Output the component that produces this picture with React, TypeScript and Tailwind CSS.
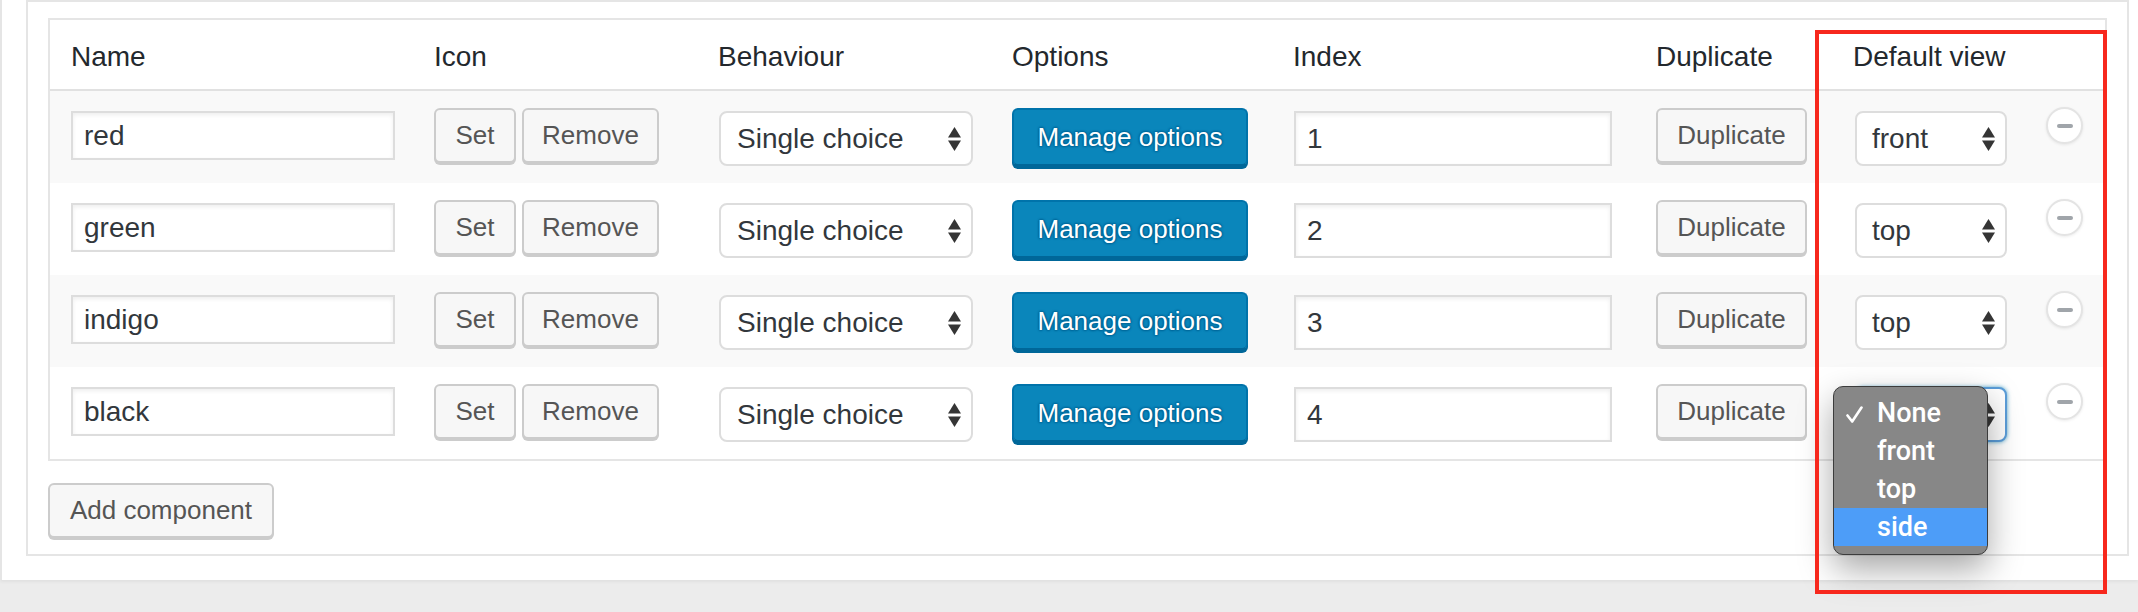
import React from "react";

function Arrows() {
  return (
    <svg width="13" height="24" viewBox="0 0 13 24" className="absolute right-[10px] top-1/2 -translate-y-1/2">
      <polygon points="6.5,0 13,10.5 0,10.5" fill="#353535" />
      <polygon points="0,13.5 13,13.5 6.5,24" fill="#353535" />
    </svg>
  );
}

function Btn({ w, children }: { w: string; children: React.ReactNode }) {
  return (
    <div
      className={`${w} h-[55px] flex items-center justify-center border-2 border-[#cccccc] bg-[#f7f7f7] rounded-[6px] text-[26px] text-[#555555] shadow-[0_2px_0_#cccccc]`}
    >
      {children}
    </div>
  );
}

export default function App() {
  const rows = [
    { name: "red", index: "1", view: "front", bg: "bg-[#f9f9f9]" },
    { name: "green", index: "2", view: "top", bg: "bg-white" },
    { name: "indigo", index: "3", view: "top", bg: "bg-[#f9f9f9]" },
    { name: "black", index: "4", view: "", bg: "bg-white", open: true },
  ];
  const cols = "grid grid-cols-[363px_284px_294px_281px_363px_197px_193px_80px]";
  const headers = ["Name", "Icon", "Behaviour", "Options", "Index", "Duplicate", "Default view", ""];

  return (
    <div className="relative w-[2138px] h-[612px] overflow-hidden bg-[#ececec] font-['Liberation_Sans',Arial,sans-serif]">
      <div className="h-[580px] bg-white border-l-2 border-[#e5e5e5] pl-[24px] shadow-[0_2px_3px_rgba(0,0,0,0.05)]">
        <div className="w-[2103px] h-[556px] border-2 border-[#e5e5e5] pl-[20px] pt-[16px]">
          <div className="w-[2059px] border-2 border-[#e5e5e5] bg-white">
            <div className={`${cols} h-[71px] border-b-2 border-[#e1e1e1]`}>
              {headers.map((h, i) => (
                <div key={i} className="pl-[21px] pt-[4px] flex items-center text-[28px] text-[#23282d]">
                  {h}
                </div>
              ))}
            </div>
            {rows.map((r, i) => (
              <div key={i} className={`${cols} h-[92px] items-start ${r.bg}`}>
                <div className="pl-[21px]">
                  <div className="mt-[20px] w-[324px] h-[49px] border-2 border-[#dddddd] bg-white shadow-[inset_0_2px_4px_rgba(0,0,0,0.07)] pl-[11px] flex items-center text-[28px] text-[#32373c]">
                    {r.name}
                  </div>
                </div>
                <div className="pl-[21px]">
                  <div className="mt-[17px] flex gap-[6px]">
                    <Btn w="w-[82px]">Set</Btn>
                    <Btn w="w-[137px]">Remove</Btn>
                  </div>
                </div>
                <div className="pl-[21px]">
                  <div className="relative mt-[20px] ml-[1px] w-[254px] h-[55px] rounded-[8px] border-2 border-[#dddddd] bg-white pl-[16px] flex items-center text-[28px] text-[#32373c]">
                    Single choice
                    <Arrows />
                  </div>
                </div>
                <div className="pl-[21px]">
                  <div className="mt-[17px] w-[236px] h-[58px] flex items-center justify-center rounded-[6px] border-2 border-[#0073aa] border-b-[#006799] bg-[#0a86bb] text-white text-[26px] shadow-[0_3px_0_#006799] [text-shadow:0_-1px_2px_#006799,1px_0_2px_#006799,0_1px_2px_#006799,-1px_0_2px_#006799]">
                    Manage options
                  </div>
                </div>
                <div className="pl-[21px]">
                  <div className="mt-[20px] ml-[1px] w-[318px] h-[55px] border-2 border-[#dddddd] bg-white shadow-[inset_0_2px_4px_rgba(0,0,0,0.07)] pl-[11px] flex items-center text-[28px] text-[#32373c]">
                    {r.index}
                  </div>
                </div>
                <div className="pl-[21px]">
                  <div className="mt-[17px]">
                    <Btn w="w-[151px]">Duplicate</Btn>
                  </div>
                </div>
                <div className="pl-[21px] relative">
                  <div
                    className={`relative mt-[20px] ml-[2px] w-[152px] h-[55px] rounded-[8px] border-2 ${
                      r.open ? "border-[#5b9dd9] shadow-[0_0_4px_rgba(30,140,190,0.8)]" : "border-[#dddddd]"
                    } bg-white pl-[15px] flex items-center text-[28px] text-[#32373c]`}
                  >
                    {r.view}
                    <Arrows />
                  </div>
                  {r.open && (
                    <div className="absolute left-[1px] top-[19px] z-20 w-[155px] h-[169px] rounded-[10px] border border-[#3c3c3c] bg-[#878787] pt-[7px] shadow-[0_14px_34px_rgba(0,0,0,0.35)] font-['Roboto',sans-serif] font-medium text-[27px] text-white">
                      {["None", "front", "top", "side"].map((o, j) => (
                        <div
                          key={o}
                          className={`relative h-[38px] pl-[43px] flex items-center ${j === 3 ? "bg-[#4d9df8]" : ""}`}
                        >
                          {j === 0 && (
                            <svg width="17" height="17" viewBox="0 0 17 17" className="absolute left-[12px] top-[12px]">
                              <path d="M1.5 9.5 L6.2 15.5 L15.5 1.5" fill="none" stroke="white" strokeWidth="2.6" strokeLinecap="round" strokeLinejoin="round" />
                            </svg>
                          )}
                          {o}
                        </div>
                      ))}
                    </div>
                  )}
                </div>
                <div className="pl-[21px]">
                  <div className="mt-[16px] w-[37px] h-[37px] rounded-full bg-white border-2 border-[#e4e4e4] shadow-[0_1px_3px_rgba(0,0,0,0.08)] flex items-center justify-center">
                    <div className="w-[16px] h-[4px] rounded-[2px] bg-[#a0a5aa]" />
                  </div>
                </div>
              </div>
            ))}
          </div>
          <div className="mt-[22px] w-[226px] h-[55px] flex items-center justify-center border-2 border-[#cccccc] bg-[#f7f7f7] rounded-[6px] text-[26px] text-[#555555] shadow-[0_2px_0_#cccccc]">
            Add component
          </div>
        </div>
      </div>
      <div className="absolute left-[1815px] top-[30px] w-[292px] h-[564px] border-4 border-[#f7281d] z-30 pointer-events-none" />
    </div>
  );
}
